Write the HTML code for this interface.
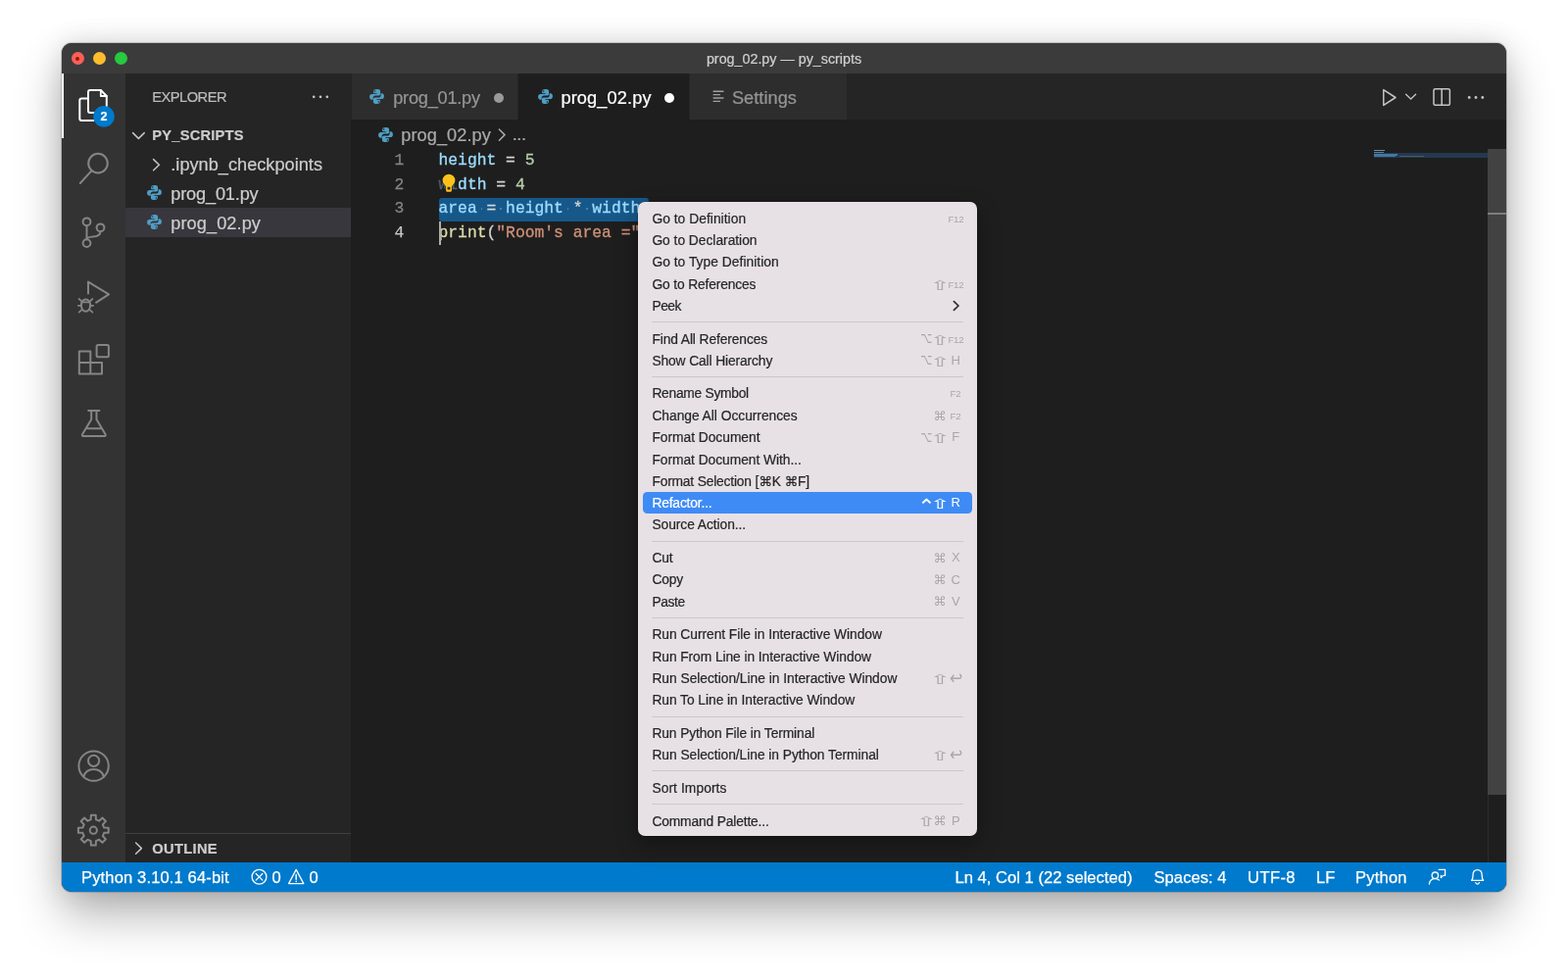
<!DOCTYPE html>
<html lang="en">
<head>
<meta charset="utf-8">
<title>prog_02.py — py_scripts</title>
<style>
*{box-sizing:border-box;margin:0;padding:0}
html,body{width:1600px;height:1000px;background:#fff;overflow:hidden}
body{font-family:"Liberation Sans","DejaVu Sans",sans-serif;position:relative}
.abs{position:absolute}
#win{position:absolute;left:63px;top:44px;width:1474px;height:866px;border-radius:10px;background:#1e1e1e;
 box-shadow:0 24px 48px rgba(0,0,0,.29),0 0 28px rgba(0,0,0,.13),0 0 0 1px rgba(0,0,0,.16)}
#clip{-webkit-text-stroke:.22px;will-change:transform;position:absolute;left:0;top:0;width:1474px;height:866px;border-radius:10px;overflow:hidden}
#title{left:0;top:0;width:1474px;height:31.5px;background:#3b3b3b}
#title .t{left:0;width:1474px;top:6.7px;text-align:center;font-size:14.3px;color:#cfcfcf;line-height:18px}
.tl{width:13px;height:13px;border-radius:50%;top:9px}
#act{left:0;top:31px;width:65px;height:805px;background:#333333}
#side{left:65px;top:31px;width:230px;height:805px;background:#252526}
#tabs{left:295px;top:31px;width:1179px;height:47.4px;background:#252526}
#editor{left:295px;top:78px;width:1179px;height:758px;background:#1e1e1e}
#status{left:0;top:836px;width:1474px;height:30px;background:#007acc;color:#fff;font-size:16.6px}
#status span{-webkit-text-stroke:.25px;position:absolute;top:.7px;line-height:30px;white-space:pre}
.tab{top:0;height:47.4px;background:#2d2d2d}
.tab .lbl{position:absolute;top:1.7px;line-height:47px;font-size:18.2px;white-space:pre}
.side-t{position:absolute;font-size:18.2px;color:#cccccc;white-space:pre;line-height:30px}
.code{-webkit-text-stroke:.3px;position:absolute;font-family:"Liberation Mono",monospace;font-size:16.33px;line-height:24.5px;white-space:pre;left:152px}
.ln{-webkit-text-stroke:.25px;position:absolute;font-family:"Liberation Mono",monospace;font-size:16.33px;line-height:24.5px;color:#858585;left:107px}
.v{color:#9cdcfe}.n{color:#b5cea8}.o{color:#d4d4d4}.f{color:#dcdcaa}.s{color:#ce9178}
#menu{will-change:transform;left:651px;top:206px;width:346.3px;height:647.4px;background:#e7e1e5;border-radius:7px;
 box-shadow:0 0 0 0.5px rgba(0,0,0,.35),0 8px 22px rgba(0,0,0,.35)}
.mi{-webkit-text-stroke:.2px;position:absolute;left:14.4px;font-size:13.8px;color:#262626;line-height:22px;white-space:pre;height:22px}
.mk{position:absolute;right:14px;font-size:13px;color:#a9a5a8;line-height:22px;white-space:pre;height:22px;text-align:right}
.ms{position:absolute;left:14.4px;width:317.6px;height:1px;background:#cdc8cc}
.mg{position:absolute;font-family:"DejaVu Sans",sans-serif;line-height:22px;height:22px;white-space:pre;display:block}
.ml{position:absolute;font-size:13px;line-height:22px;width:20px;text-align:center}
.mf{position:absolute;font-size:9.7px;line-height:22px;letter-spacing:-.25px}
</style>
</head>
<body>
<div id="win"><div id="clip">
<div id="title" class="abs">
<div class="abs tl" style="left:9.5px;background:#fe5f57"></div>
<div class="abs" style="left:14px;top:13.5px;width:4px;height:4px;border-radius:50%;background:#8c1a10"></div>
<div class="abs tl" style="left:32px;background:#febc2e"></div>
<div class="abs tl" style="left:54.3px;background:#28c840"></div>
<div class="abs t">prog_02.py — py_scripts</div>
</div>
<div id="act" class="abs"></div>
<div class="abs" style="left:0;top:31px;width:2px;height:65.5px;background:#fff"></div>
<svg class="abs" style="left:-63px;top:-44px" width="1600" height="1000" viewBox="0 0 1600 1000" fill="none" stroke-linejoin="round" stroke-linecap="round">
<g stroke="#ffffff" stroke-width="2">
<path d="M97.6 100.6H83.3a2 2 0 0 0-2 2V121a2 2 0 0 0 2 2h12"/>
<path d="M92 92h10.8l6 6v15a2 2 0 0 1-2 2H92a2 2 0 0 1-2-2V94a2 2 0 0 1 2-2z" fill="#333333"/>
<path d="M102.8 92v6h6" stroke-width="1.8"/>
</g>
<circle cx="106" cy="118.8" r="10.8" fill="#007acc"/>
<g stroke="#858585" stroke-width="2">
<circle cx="100" cy="166.6" r="9.8"/>
<path d="M93.3 174.3L81.8 187"/>
<circle cx="88.5" cy="226.3" r="3.9"/><circle cx="102.5" cy="232.3" r="3.9"/><circle cx="88.5" cy="248.1" r="3.9"/>
<path d="M88.5 230.2V244.2M102.5 236.2c0 4.5-4 5.2-8 5.4c-3 .2-6 .3-6 2.6"/>
<path d="M90 299.5V287.6L111 300.3L98.2 308.6"/>
<ellipse cx="87.5" cy="311.6" rx="4.6" ry="6.2"/>
<path d="M83.8 307.8L80.6 305M91.2 307.8L94.4 305M82.9 311.8H79.8M92.1 311.8H95.2M83.8 315.8L80.6 318.6M91.2 315.8L94.4 318.6M84.2 308.4H90.8" stroke-width="1.7"/>
<path d="M80.8 358.5H92.3V381.5H80.8ZM80.8 370H104V381.5H92.3"/>
<rect x="98.6" y="352" width="12.3" height="12.3" rx="1.5"/>
<path d="M90.2 419H101.4M93.2 419.5V428L84 443.3a1 1 0 0 0 .9 1.6H106.7a1 1 0 0 0 .9-1.6L98.5 428V419.5M89.2 437.3H102.3"/>
<circle cx="95.6" cy="781.6" r="15.2"/><circle cx="95.6" cy="776.3" r="5.6"/>
<path d="M85.3 792.6c1.5-5.2 5.5-7.6 10.3-7.6s8.8 2.4 10.3 7.6"/>
<path d="M92.86,831.79 L97.74,831.79 L97.91,836.31 L101.15,837.65 L104.47,834.58 L107.92,838.03 L104.85,841.35 L106.19,844.59 L110.71,844.76 L110.71,849.64 L106.19,849.81 L104.85,853.05 L107.92,856.37 L104.47,859.82 L101.15,856.75 L97.91,858.09 L97.74,862.61 L92.86,862.61 L92.69,858.09 L89.45,856.75 L86.13,859.82 L82.68,856.37 L85.75,853.05 L84.41,849.81 L79.89,849.64 L79.89,844.76 L84.41,844.59 L85.75,841.35 L82.68,838.03 L86.13,834.58 L89.45,837.65 L92.69,836.31Z"/><circle cx="95.3" cy="847.2" r="3.6"/>
</g>
</svg>
<div class="abs" style="left:33px;top:66.2px;width:20px;height:19px;line-height:19px;text-align:center;color:#fff;font-weight:700;font-size:12.5px">2</div>

<div id="side" class="abs"></div>
<svg width="0" height="0" style="position:absolute"><defs>
<symbol id="py" viewBox="0 0 16 16"><path fill="#4f9ec4" d="M7.9 1C5.9 1 4.9 1.8 4.9 3.1V4.9H8.1V5.6H3.3C1.9 5.6 1 6.7 1 8.3C1 10 1.9 11 3.1 11H4.4V9.2C4.4 8 5.4 7 6.7 7H9.7C10.7 7 11.4 6.2 11.4 5.3V3.1C11.4 1.8 10.3 1 9 1ZM6.3 2.2A.7.7 0 1 1 6.3 3.6A.7.7 0 1 1 6.3 2.2Z"/><path fill="#4f9ec4" d="M8.1 15C10.1 15 11.1 14.2 11.1 12.9V11.1H7.9V10.4H12.7C14.1 10.4 15 9.3 15 7.7C15 6 14.1 5 12.9 5H11.9V6.8C11.9 8 10.9 9 9.6 9H6.3C5.3 9 4.6 9.8 4.6 10.7V12.9C4.6 14.2 5.7 15 7 15ZM9.7 13.8A.7.7 0 1 1 9.7 12.4A.7.7 0 1 1 9.7 13.8Z"/></symbol>
</defs></svg>
<div id="t_exp" class="abs" style="left:92.3px;top:46.4px;font-size:14.7px;color:#bbbbbb;line-height:18px;white-space:pre;letter-spacing:-0.538px">EXPLORER</div>
<div id="t_pys" class="abs" style="left:92.3px;top:85px;font-size:14.7px;font-weight:700;color:#cccccc;line-height:18px;white-space:pre;letter-spacing:0.198px">PY_SCRIPTS</div>
<div class="abs" style="left:65px;top:168px;width:230px;height:30px;background:#37373d"></div>
<div id="t_ipy" class="side-t" style="left:111.3px;top:109px;letter-spacing:-0.000px">.ipynb_checkpoints</div>
<div id="t_p1" class="side-t" style="left:111.3px;top:139px;letter-spacing:-0.177px">prog_01.py</div>
<div id="t_p2" class="side-t" style="left:111.3px;top:169px;letter-spacing:0.073px">prog_02.py</div>
<svg class="abs" style="left:85.5px;top:143.8px" width="17" height="17"><use href="#py"/></svg>
<svg class="abs" style="left:85.5px;top:173.8px" width="17" height="17"><use href="#py"/></svg>
<div class="abs" style="left:65px;top:806px;width:230px;height:1px;background:#3f3f40"></div>
<div id="t_out" class="abs" style="left:92.3px;top:813px;font-size:14.7px;font-weight:700;color:#cccccc;line-height:18px;white-space:pre;letter-spacing:0.312px">OUTLINE</div>
<svg class="abs" style="left:-63px;top:-44px" width="1600" height="1000" viewBox="0 0 1600 1000" fill="none" stroke="#c5c5c5" stroke-width="1.5" stroke-linecap="round" stroke-linejoin="round">
<path d="M135.6 135.6L141.4 141.4L147.2 135.6"/>
<path d="M156.6 162.6L162.4 168.2L156.6 173.8"/>
<path d="M138.6 860L144.4 865.6L138.6 871.2"/>
<g fill="#c5c5c5" stroke="none"><circle cx="320.2" cy="98.8" r="1.35"/><circle cx="327" cy="98.8" r="1.35"/><circle cx="333.8" cy="98.8" r="1.35"/></g>
</svg>

<div id="tabs" class="abs">
<div class="abs tab" style="left:.8px;width:169.2px"><span id="t_tab1" class="lbl" style="left:42.4px;color:#959595;letter-spacing:-0.237px">prog_01.py</span><div class="abs" style="left:145px;top:19.5px;width:10.4px;height:10.4px;border-radius:50%;background:#9a9a9a"></div>
<svg class="abs" style="left:17.5px;top:14.5px" width="17" height="17"><use href="#py"/></svg></div>
<div class="abs tab" style="left:171px;width:173.5px;background:#1e1e1e"><span id="t_tab2" class="lbl" style="left:43.4px;color:#ffffff;letter-spacing:0.123px">prog_02.py</span><div class="abs" style="left:148.8px;top:19.5px;width:10.4px;height:10.4px;border-radius:50%;background:#ffffff"></div>
<svg class="abs" style="left:18.6px;top:14.5px" width="17" height="17"><use href="#py"/></svg></div>
<div class="abs tab" style="left:345.5px;width:160.5px"><span id="t_tab3" class="lbl" style="left:43.4px;color:#959595;letter-spacing:0.048px">Settings</span>
<svg class="abs" style="left:23px;top:17px" width="13" height="13" viewBox="0 0 13 13" stroke="#a0a0a0" stroke-width="1.4" fill="none"><path d="M.6 1.2H11.4M.6 4.6H8M.6 8H11.4M.6 11.4H8"/></svg></div>
</div>
<svg class="abs" style="left:-63px;top:-44px" width="1600" height="1000" viewBox="0 0 1600 1000" fill="none" stroke="#c5c5c5" stroke-width="1.5" stroke-linecap="round" stroke-linejoin="round">
<path d="M1411.8 91.6V107.4L1424 99.5Z"/>
<path d="M1434.6 96.2L1439.6 101L1444.6 96.2" stroke-width="1.3"/>
<rect x="1463" y="90.8" width="16.4" height="16.4" rx="1.5"/><path d="M1471.2 91V107"/>
<g fill="#c5c5c5" stroke="none"><circle cx="1499.2" cy="99.5" r="1.4"/><circle cx="1506" cy="99.5" r="1.4"/><circle cx="1512.8" cy="99.5" r="1.4"/></g>
</svg>

<div id="editor" class="abs"></div>
<svg class="abs" style="left:321.6px;top:84.6px" width="17" height="17"><use href="#py"/></svg>
<div id="t_bc" class="abs" style="left:346.3px;top:79.2px;line-height:30px;font-size:18.2px;color:#a9a9a9;white-space:pre;letter-spacing:0.048px">prog_02.py</div>
<div class="abs" style="left:459.8px;top:77.7px;line-height:30px;font-size:18.2px;color:#a9a9a9;white-space:pre;letter-spacing:-.5px">...</div>
<svg class="abs" style="left:-63px;top:-44px" width="1600" height="1000" viewBox="0 0 1600 1000" fill="none" stroke="#a9a9a9" stroke-width="1.5" stroke-linecap="round" stroke-linejoin="round"><path d="M509.4 132L515 137.6L509.4 143.2"/></svg>
<div class="abs" style="left:384.5px;top:157.8px;width:214.5px;height:24.5px;background:#17588b;border-radius:3px"></div>
<div class="abs" style="left:427.7px;top:168.2px;width:1.6px;height:1.6px;border-radius:50%;background:#5d87ab"></div><div class="abs" style="left:447.3px;top:168.2px;width:1.6px;height:1.6px;border-radius:50%;background:#5d87ab"></div><div class="abs" style="left:515.7px;top:168.2px;width:1.6px;height:1.6px;border-radius:50%;background:#5d87ab"></div><div class="abs" style="left:535.3px;top:168.2px;width:1.6px;height:1.6px;border-radius:50%;background:#5d87ab"></div>
<div class="ln" style="top:108.3px;left:339.5px">1</div>
<div class="ln" style="top:132.7px;left:339.5px">2</div>
<div class="ln" style="top:157.2px;left:339.5px">3</div>
<div class="ln" style="top:181.6px;left:339.5px;color:#c6c6c6">4</div>
<div class="code" style="top:108.3px;left:384.5px"><span class="v">height</span><span class="o"> = </span><span class="n">5</span></div>
<div class="code" style="top:132.7px;left:384.5px"><span style="color:#4f5f6a">wi</span><span class="v">dth</span><span class="o"> = </span><span class="n">4</span></div>
<div class="code" style="top:157.2px;left:384.5px"><span class="v">area</span><span class="o"> = </span><span class="v">height</span><span class="o"> * </span><span class="v">width</span></div>
<div class="code" style="top:181.6px;left:384.5px"><span class="f">print</span><span class="o">(</span><span class="s">"Room's area ="</span></div>
<div class="abs" style="left:385px;top:181.8px;width:2px;height:24.4px;background:#aeafad"></div>
<svg class="abs" style="left:388.4px;top:133.2px" width="14" height="20" viewBox="0 0 14 20"><path fill="#fcc21b" stroke="#1a1a1a" stroke-width="1" paint-order="stroke" d="M7 .7A6.4 6.4 0 0 0 .6 7.1C.6 9.2 1.7 10.6 2.8 11.8C3.7 12.8 4.1 13.4 4.1 14.4V17.4A1.4 1.4 0 0 0 5.5 18.8H8.5A1.4 1.4 0 0 0 9.9 17.4V14.4C9.9 13.4 10.3 12.8 11.2 11.8C12.3 10.6 13.4 9.2 13.4 7.1A6.4 6.4 0 0 0 7 .7Z"/><rect x="5.6" y="13.8" width="2.8" height="2.7" fill="#3a2a08"/></svg>
<div class="abs" style="left:1338.5px;top:112.3px;width:116.5px;height:4.4px;background:#24384f"></div>
<div class="abs" style="left:1338.5px;top:108.5px;width:11px;height:1.6px;background:#6d8fa3"></div>
<div class="abs" style="left:1338.5px;top:110.6px;width:10px;height:1.4px;background:#5d7f93"></div>
<div class="abs" style="left:1338.5px;top:112.6px;width:24px;height:2px;background:#3f78a8"></div>
<div class="abs" style="left:1338.5px;top:115px;width:22px;height:1.4px;background:#4a7391"></div>
<div class="abs" style="left:1365px;top:115.3px;width:25px;height:1.2px;background:#4c5a63"></div>
<div class="abs" style="left:1455px;top:108px;width:1px;height:728px;background:#2d2d2d"></div>
<div class="abs" style="left:1455px;top:108px;width:19px;height:659.4px;background:#424242"></div>
<div class="abs" style="left:1455px;top:173px;width:19px;height:2px;background:#7d7d7d"></div>

<div id="status" class="abs">
<span id="t_s1" style="left:20px;letter-spacing:0.113px">Python 3.10.1 64-bit</span>
<span style="left:214.5px">0</span><span style="left:252.5px">0</span>
<span id="t_s2" style="left:911.5px;letter-spacing:0.008px">Ln 4, Col 1 (22 selected)</span>
<span id="t_s3" style="left:1114.5px;letter-spacing:0.034px">Spaces: 4</span>
<span id="t_s4" style="left:1210px;letter-spacing:0.397px">UTF-8</span>
<span id="t_s5" style="left:1280px;letter-spacing:-0.038px">LF</span>
<span id="t_s6" style="left:1320px;letter-spacing:0.188px">Python</span>
</div>
<svg class="abs" style="left:-63px;top:-44px" width="1600" height="1000" viewBox="0 0 1600 1000" fill="none" stroke="#ffffff" stroke-width="1.3" stroke-linecap="round" stroke-linejoin="round">
<circle cx="264.5" cy="894.8" r="7.4"/><path d="M261.2 891.5L267.8 898.1M267.8 891.5L261.2 898.1"/>
<path d="M302.2 887.4L309.8 901.6H294.6Z"/><path d="M302.2 892.4V897.2M302.2 899.2V899.4" stroke-width="1.5"/>
<circle cx="1464.4" cy="893.2" r="3.2"/><path d="M1458.4 902c.6-3.6 2.8-5.4 6-5.4c1.6 0 3 .5 4 1.4"/><path d="M1468.2 887.4H1474.6V893.4H1472.6L1470.4 895.6V893.4"/>
<path d="M1501.6 898.4c1-1.2 1.4-2.6 1.4-5.2c0-3.4 1.8-5.6 4.6-5.6s4.6 2.2 4.6 5.6c0 2.6.4 4 1.4 5.2ZM1505.8 900.6c.4 1.1 1 1.5 1.8 1.5s1.4-.4 1.8-1.5"/>
</svg>

</div></div>
<div id="menu" class="abs">
<div class="mi" style="top:6.6px;letter-spacing:0.040px">Go to Definition</div>
<span class="mf" style="left:314.4px;width:18px;text-align:right;top:6.6px;color:#aaa6a9">F12</span>
<div class="mi" style="top:29.0px;letter-spacing:-0.016px">Go to Declaration</div>
<div class="mi" style="top:51.3px;letter-spacing:0.034px">Go to Type Definition</div>
<div class="mi" style="top:73.7px;letter-spacing:-0.140px">Go to References</div>
<span class="mg" style="left:303.19px;top:74.52px;font-size:13.03px;transform-origin:5.41px 10.48px;transform:scale(2.02,1.04);color:#aaa6a9">⇧</span><span class="mf" style="left:314.4px;width:18px;text-align:right;top:73.7px;color:#aaa6a9">F12</span>
<div class="mi" style="top:96.1px;letter-spacing:-0.463px">Peek</div>
<svg class="abs" style="left:321px;top:100.3px" width="8" height="12" viewBox="0 0 8 12" fill="none" stroke="#2b2b2b" stroke-width="1.7" stroke-linecap="round" stroke-linejoin="round"><path d="M1.4 1.6L6 6L1.4 10.4"/></svg>
<div class="ms" style="top:122.2px"></div>
<div class="mi" style="top:129.7px;letter-spacing:-0.102px">Find All References</div>
<span class="mg" style="left:303.19px;top:130.52px;font-size:13.03px;transform-origin:5.41px 10.48px;transform:scale(2.02,1.04);color:#aaa6a9">⇧</span><span class="mg" style="left:285.20px;top:128.11px;font-size:15.86px;transform-origin:9.20px 11.79px;transform:scale(0.656,1.000);color:#aaa6a9">⌥</span><span class="mf" style="left:314.4px;width:18px;text-align:right;top:129.7px;color:#aaa6a9">F12</span>
<div class="mi" style="top:152.0px;letter-spacing:-0.115px">Show Call Hierarchy</div>
<span class="mg" style="left:303.19px;top:152.82px;font-size:13.03px;transform-origin:5.41px 10.48px;transform:scale(2.02,1.04);color:#aaa6a9">⇧</span><span class="mg" style="left:285.20px;top:150.41px;font-size:15.86px;transform-origin:9.20px 11.79px;transform:scale(0.656,1.000);color:#aaa6a9">⌥</span><span class="ml" style="left:314.3px;top:151.2px;color:#aaa6a9">H</span>
<div class="ms" style="top:178.1px"></div>
<div class="mi" style="top:185.4px;letter-spacing:-0.269px">Rename Symbol</div>
<span class="mf" style="left:315.0px;width:18px;text-align:center;top:185.4px;color:#aaa6a9">F2</span>
<div class="mi" style="top:207.8px;letter-spacing:-0.024px">Change All Occurrences</div>
<span class="mg" style="left:302.28px;top:207.51px;font-size:12.63px;transform-origin:6.32px 10.49px;transform:scale(1.042,1.000);color:#aaa6a9">⌘</span><span class="mf" style="left:315.0px;width:18px;text-align:center;top:207.8px;color:#aaa6a9">F2</span>
<div class="mi" style="top:230.1px;letter-spacing:-0.021px">Format Document</div>
<span class="mg" style="left:303.19px;top:230.92px;font-size:13.03px;transform-origin:5.41px 10.48px;transform:scale(2.02,1.04);color:#aaa6a9">⇧</span><span class="mg" style="left:285.20px;top:228.51px;font-size:15.86px;transform-origin:9.20px 11.79px;transform:scale(0.656,1.000);color:#aaa6a9">⌥</span><span class="ml" style="left:314.3px;top:229.3px;color:#aaa6a9">F</span>
<div class="mi" style="top:252.5px;letter-spacing:-0.041px">Format Document With...</div>
<div class="mi" style="top:274.8px;letter-spacing:-0.177px">Format Selection [⌘K ⌘F]</div>
<div class="abs" style="left:4.8px;top:296.1px;width:336.4px;height:22.2px;border-radius:4.5px;background:#3f8bf5"></div>
<div class="mi" style="top:297.0px;color:#fff;letter-spacing:-0.163px">Refactor...</div>
<span class="mg" style="left:303.19px;top:297.82px;font-size:13.03px;transform-origin:5.41px 10.48px;transform:scale(2.02,1.04);color:#ffffff">⇧</span><span class="mg" style="left:286.10px;top:300.30px;font-size:20.00px;transform-origin:8.30px 5.70px;transform:scale(1.093,1.040);color:#ffffff">⌃</span><span class="ml" style="left:314.3px;top:296.2px;color:#ffffff">R</span>
<div class="mi" style="top:319.4px;letter-spacing:-0.056px">Source Action...</div>
<div class="ms" style="top:345.8px"></div>
<div class="mi" style="top:353.0px;letter-spacing:-0.145px">Cut</div>
<span class="mg" style="left:302.28px;top:352.71px;font-size:12.63px;transform-origin:6.32px 10.49px;transform:scale(1.042,1.000);color:#aaa6a9">⌘</span><span class="ml" style="left:314.3px;top:352.2px;color:#aaa6a9">X</span>
<div class="mi" style="top:375.4px;letter-spacing:-0.180px">Copy</div>
<span class="mg" style="left:302.28px;top:375.11px;font-size:12.63px;transform-origin:6.32px 10.49px;transform:scale(1.042,1.000);color:#aaa6a9">⌘</span><span class="ml" style="left:314.3px;top:374.6px;color:#aaa6a9">C</span>
<div class="mi" style="top:397.7px;letter-spacing:-0.356px">Paste</div>
<span class="mg" style="left:302.28px;top:397.41px;font-size:12.63px;transform-origin:6.32px 10.49px;transform:scale(1.042,1.000);color:#aaa6a9">⌘</span><span class="ml" style="left:314.3px;top:396.9px;color:#aaa6a9">V</span>
<div class="ms" style="top:424.1px"></div>
<div class="mi" style="top:431.3px;letter-spacing:-0.044px">Run Current File in Interactive Window</div>
<div class="mi" style="top:453.7px;letter-spacing:-0.075px">Run From Line in Interactive Window</div>
<div class="mi" style="top:476.1px;letter-spacing:-0.020px">Run Selection/Line in Interactive Window</div>
<span class="mg" style="left:303.19px;top:476.92px;font-size:13.03px;transform-origin:5.41px 10.48px;transform:scale(2.02,1.04);color:#aaa6a9">⇧</span><span class="mg" style="left:316.71px;top:475.21px;font-size:18.30px;transform-origin:7.59px 11.09px;transform:scale(0.868,1.000);color:#aaa6a9">↩</span>
<div class="mi" style="top:498.4px;letter-spacing:-0.047px">Run To Line in Interactive Window</div>
<div class="ms" style="top:524.9px"></div>
<div class="mi" style="top:531.9px;letter-spacing:-0.098px">Run Python File in Terminal</div>
<div class="mi" style="top:554.2px;letter-spacing:-0.038px">Run Selection/Line in Python Terminal</div>
<span class="mg" style="left:303.19px;top:555.02px;font-size:13.03px;transform-origin:5.41px 10.48px;transform:scale(2.02,1.04);color:#aaa6a9">⇧</span><span class="mg" style="left:316.71px;top:553.31px;font-size:18.30px;transform-origin:7.59px 11.09px;transform:scale(0.868,1.000);color:#aaa6a9">↩</span>
<div class="ms" style="top:580.4px"></div>
<div class="mi" style="top:588.0px;letter-spacing:0.080px">Sort Imports</div>
<div class="ms" style="top:614.0px"></div>
<div class="mi" style="top:621.6px;letter-spacing:-0.147px">Command Palette...</div>
<span class="mg" style="left:302.28px;top:621.31px;font-size:12.63px;transform-origin:6.32px 10.49px;transform:scale(1.042,1.000);color:#aaa6a9">⌘</span><span class="mg" style="left:288.99px;top:622.42px;font-size:13.03px;transform-origin:5.41px 10.48px;transform:scale(2.02,1.04);color:#aaa6a9">⇧</span><span class="ml" style="left:314.3px;top:620.8px;color:#aaa6a9">P</span>
</div>
<!--MENUKEYS-->
</body>
</html>
